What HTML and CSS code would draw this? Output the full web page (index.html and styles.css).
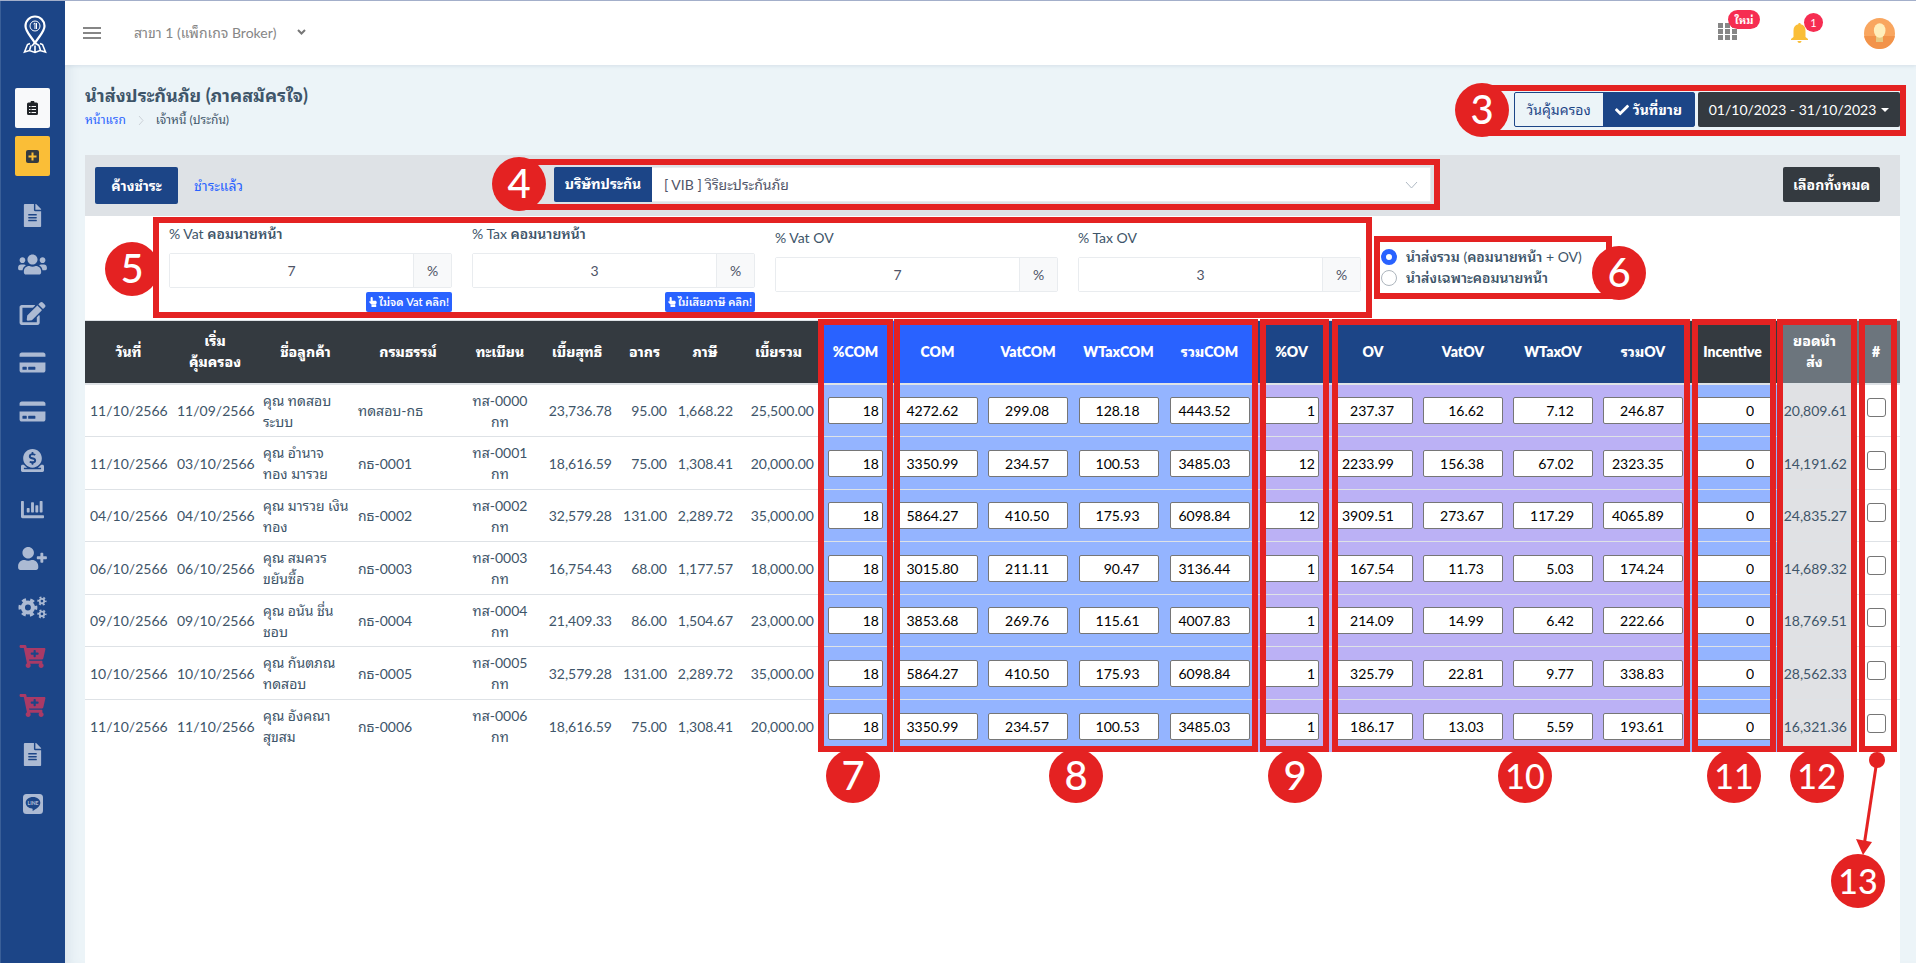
FILE: index.html
```html
<!DOCTYPE html>
<html lang="th">
<head>
<meta charset="utf-8">
<title>นำส่งประกันภัย (ภาคสมัครใจ)</title>
<link rel="stylesheet" href="styles.css">
</head>
<body>
<svg class="sprite" aria-hidden="true">
  <symbol id="i-file" viewBox="0 0 384 512"><path d="M224 136V0H24C10.700 0 0 10.700 0 24v464c0 13.300 10.700 24 24 24h336c13.300 0 24-10.700 24-24V160H248c-13.200 0-24-10.800-24-24zm64 236c0 6.600-5.400 12-12 12H108c-6.600 0-12-5.400-12-12v-8c0-6.600 5.400-12 12-12h168c6.600 0 12 5.400 12 12v8zm0-64c0 6.600-5.400 12-12 12H108c-6.600 0-12-5.400-12-12v-8c0-6.600 5.400-12 12-12h168c6.600 0 12 5.400 12 12v8zm0-72v8c0 6.600-5.400 12-12 12H108c-6.600 0-12-5.400-12-12v-8c0-6.600 5.400-12 12-12h168c6.600 0 12 5.400 12 12zm96-114.100v6.100H256V0h6.100c6.400 0 12.500 2.500 17 7l97.900 98c4.500 4.500 7 10.600 7 16.900z"/></symbol>
  <symbol id="i-users" viewBox="0 0 640 512"><path d="M96 224c35.300 0 64-28.700 64-64s-28.700-64-64-64-64 28.700-64 64 28.700 64 64 64zm448 0c35.300 0 64-28.700 64-64s-28.700-64-64-64-64 28.700-64 64 28.700 64 64 64zm32 32h-64c-17.600 0-33.500 7.100-45.100 18.600 40.300 22.100 68.900 62 75.100 109.400h66c17.700 0 32-14.300 32-32v-32c0-35.300-28.700-64-64-64zm-256 0c61.900 0 112-50.100 112-112S381.900 32 320 32 208 82.100 208 144s50.100 112 112 112zm76.800 32h-8.300c-20.800 10-43.900 16-68.500 16s-47.600-6-68.500-16h-8.300C179.600 288 128 339.600 128 403.200V432c0 26.500 21.500 48 48 48h288c26.500 0 48-21.500 48-48v-28.800c0-63.600-51.600-115.200-115.200-115.200zm-223.700-13.400C161.500 263.100 145.600 256 128 256H64c-35.300 0-64 28.700-64 64v32c0 17.700 14.300 32 32 32h65.900c6.300-47.400 34.900-87.300 75.200-109.400z"/></symbol>
  <symbol id="i-edit" viewBox="0 0 576 512"><path d="M402.600 83.200l90.200 90.200c3.800 3.800 3.800 10 0 13.800L274.400 405.600l-92.800 10.300c-12.400 1.400-22.900-9.100-21.500-21.500l10.300-92.800L388.800 83.200c3.800-3.800 10-3.800 13.800 0zm162-22.900l-48.800-48.800c-15.200-15.200-39.900-15.200-55.200 0l-35.400 35.400c-3.800 3.800-3.800 10 0 13.800l90.200 90.200c3.800 3.800 10 3.800 13.800 0l35.400-35.400c15.200-15.300 15.200-40 0-55.200zM384 346.200V448H64V128h229.800c3.200 0 6.200-1.300 8.500-3.500l40-40c7.600-7.600 2.200-20.500-8.500-20.500H48C21.500 64 0 85.500 0 112v352c0 26.500 21.500 48 48 48h352c26.500 0 48-21.500 48-48V306.200c0-10.700-12.900-16-20.500-8.500l-40 40c-2.200 2.300-3.500 5.300-3.500 8.500z"/></symbol>
  <symbol id="i-card" viewBox="0 0 576 512"><path d="M0 432c0 26.500 21.500 48 48 48h480c26.500 0 48-21.500 48-48V256H0v176zm192-68c0-6.600 5.400-12 12-12h136c6.600 0 12 5.400 12 12v40c0 6.600-5.400 12-12 12H204c-6.600 0-12-5.400-12-12v-40zm-128 0c0-6.600 5.400-12 12-12h72c6.600 0 12 5.400 12 12v40c0 6.600-5.400 12-12 12H76c-6.600 0-12-5.400-12-12v-40zM576 80v48H0V80c0-26.500 21.500-48 48-48h480c26.500 0 48 21.500 48 48z"/></symbol>
  <symbol id="i-donate" viewBox="0 0 512 512"><path d="M256 416c114.900 0 208-93.100 208-208S370.900 0 256 0 48 93.100 48 208s93.100 208 208 208zM233.800 97.400V80.600c0-9.200 7.400-16.600 16.600-16.600h11.100c9.200 0 16.600 7.400 16.600 16.600v17c15.500.8 30.500 6.100 43 15.400 5.600 4.100 6.200 12.300 1.200 17.100L306 145.600c-3.800 3.700-9.500 3.800-14 1-5.400-3.400-11.400-5.100-17.800-5.100h-38.900c-9 0-16.300 8.200-16.300 18.300 0 8.200 5 15.500 12.100 17.600l62.300 18.700c25.700 7.700 43.700 32.400 43.700 60.100 0 34-26.400 61.500-59.100 62.400v16.800c0 9.200-7.400 16.600-16.600 16.600h-11.100c-9.200 0-16.600-7.400-16.600-16.600v-17c-15.500-.8-30.500-6.100-43-15.400-5.600-4.100-6.200-12.300-1.200-17.100l16.300-15.500c3.800-3.700 9.500-3.800 14-1 5.400 3.400 11.400 5.100 17.800 5.100h38.900c9 0 16.300-8.200 16.300-18.300 0-8.200-5-15.500-12.100-17.600l-62.300-18.700c-25.700-7.700-43.700-32.400-43.700-60.100.1-34 26.400-61.500 59.100-62.400zM480 352h-32.500c-19.600 26-44.600 47.700-73 64h63.800c5.300 0 9.600 3.600 9.600 8v16c0 4.400-4.300 8-9.600 8H73.600c-5.300 0-9.600-3.600-9.600-8v-16c0-4.400 4.300-8 9.600-8h63.800c-28.400-16.300-53.300-38-73-64H32c-17.700 0-32 14.300-32 32v96c0 17.700 14.300 32 32 32h448c17.700 0 32-14.300 32-32v-96c0-17.700-14.300-32-32-32z"/></symbol>
  <symbol id="i-chart" viewBox="0 0 512 512"><path d="M332.800 320h38.400c6.400 0 12.800-6.400 12.800-12.800V172.800c0-6.400-6.400-12.800-12.800-12.800h-38.400c-6.400 0-12.800 6.400-12.800 12.800v134.400c0 6.400 6.400 12.800 12.800 12.800zm96 0h38.400c6.400 0 12.800-6.400 12.800-12.800V76.800c0-6.400-6.400-12.800-12.800-12.800h-38.400c-6.400 0-12.800 6.400-12.800 12.800v230.400c0 6.400 6.400 12.800 12.800 12.800zm-288 0h38.400c6.400 0 12.800-6.400 12.800-12.800v-70.400c0-6.400-6.400-12.800-12.800-12.800h-38.400c-6.400 0-12.800 6.400-12.800 12.800v70.400c0 6.400 6.400 12.800 12.800 12.800zm96 0h38.400c6.400 0 12.800-6.400 12.800-12.800V108.800c0-6.400-6.400-12.800-12.800-12.800h-38.400c-6.400 0-12.800 6.400-12.800 12.800v198.400c0 6.400 6.400 12.800 12.800 12.800zM496 384H64V80c0-8.800-7.200-16-16-16H16C7.200 64 0 71.200 0 80v336c0 17.700 14.300 32 32 32h464c8.800 0 16-7.200 16-16v-32c0-8.800-7.200-16-16-16z"/></symbol>
  <symbol id="i-adduser" viewBox="0 0 640 512"><path d="M624 208h-64v-64c0-8.800-7.200-16-16-16h-32c-8.800 0-16 7.200-16 16v64h-64c-8.800 0-16 7.200-16 16v32c0 8.800 7.200 16 16 16h64v64c0 8.800 7.200 16 16 16h32c8.800 0 16-7.200 16-16v-64h64c8.800 0 16-7.200 16-16v-32c0-8.800-7.200-16-16-16zm-400 48c70.700 0 128-57.300 128-128S294.700 0 224 0 96 57.300 96 128s57.300 128 128 128zm89.600 32h-16.700c-22.200 10.200-46.900 16-72.900 16s-50.600-5.800-72.900-16h-16.700C60.200 288 0 348.200 0 422.400V464c0 26.500 21.500 48 48 48h352c26.500 0 48-21.500 48-48v-41.600c0-74.200-60.200-134.400-134.400-134.400z"/></symbol>
  <symbol id="i-cogs" viewBox="0 0 640 512"><g fill="none" stroke="currentColor"><circle cx="218" cy="256" r="112" stroke-width="92"/><circle cx="218" cy="256" r="174" stroke-width="72" stroke-dasharray="91.100 91.100" stroke-dashoffset="45"/><circle cx="530" cy="112" r="50" stroke-width="40"/><circle cx="530" cy="112" r="83" stroke-width="40" stroke-dasharray="43.400 43.400" stroke-dashoffset="21"/><circle cx="530" cy="400" r="50" stroke-width="40"/><circle cx="530" cy="400" r="83" stroke-width="40" stroke-dasharray="43.400 43.400" stroke-dashoffset="21"/></g></symbol>
  <symbol id="i-cart" viewBox="0 0 576 512"><path d="M504.700 320H211.600l6.500 32h268.400c15.400 0 26.800 14.300 23.400 29.300l-5.500 24.300C523.100 414.700 536 433.800 536 456c0 31.200-25.500 56.400-56.800 56-29.800-.4-54.400-24.600-55.200-54.400-.4-16.300 6.100-31 16.800-41.600H231.200C241.600 426.200 248 440.300 248 456c0 31.800-26.500 57.400-58.700 55.900-28.500-1.300-51.800-24.400-53.300-52.900-1.200-22 10.400-41.500 28.100-51.600L93.900 64H24C10.700 64 0 53.300 0 40V24C0 10.700 10.700 0 24 0h102.500c11.400 0 21.200 8 23.500 19.200L159.200 64H552c15.400 0 26.800 14.300 23.400 29.300l-47.300 208C525.600 312.200 515.900 320 504.700 320zM408 168h-48v-40c0-8.800-7.200-16-16-16h-16c-8.800 0-16 7.200-16 16v40h-48c-8.800 0-16 7.200-16 16v16c0 8.800 7.200 16 16 16h48v40c0 8.800 7.200 16 16 16h16c8.800 0 16-7.200 16-16v-40h48c8.800 0 16-7.200 16-16v-16c0-8.800-7.200-16-16-16z"/></symbol>
  <symbol id="i-check" viewBox="0 0 512 512"><path d="M173.900 439.400L7.500 273c-10-10-10-26.200 0-36.200l36.200-36.200c10-10 26.200-10 36.200 0L192 312.700 432.100 72.600c10-10 26.200-10 36.200 0l36.200 36.200c10 10 10 26.200 0 36.200L210.100 439.400c-10 10-26.200 10-36.200 0z"/></symbol>
  <symbol id="i-hand" viewBox="0 0 9 11"><path d="M3 0c.7 0 1.200.5 1.200 1.200V4h2.600C8 4 8.700 4.700 8.700 5.800c0 1.300-.6 1.900-.8 2.700H3L.3 5.700C-.2 5 .8 4.100 1.800 5V1.200C1.800.5 2.300 0 3 0zM2.800 9h5.300v2H2.800z"/></symbol>
</svg>

<div class="app">
  <nav class="sidebar" aria-label="เมนูหลัก">
    <a class="brand" href="#" aria-label="หน้าแรก">
      <svg width="24" height="39" viewBox="0 0 24 39" fill="none" stroke="#fff" stroke-width="2.200"><path d="M12 28C7 20 2.500 16.500 2.500 11a9.500 9.500 0 0 1 19 0C21.500 16.500 17 20 12 28z"/><circle cx="12" cy="11" r="5" stroke-width="1"/><path d="M10.500 9l1.500-1v6M13.500 8v6" stroke-width="1"/><path d="M13 26l-4 5M12 28l4 2.500M7 28.500l-2.500 1L1.500 37l5-1.500L12 37.500l5-2 5.500 1.500-3-7.500-2.500-1M8 30.500L6.500 35.500M12 30.500V37M16 30.500l1.500 5" stroke-width="1.600"/></svg>
    </a>
    <div class="quick">
      <a class="quick-btn quick-light" href="#" aria-label="รายการ"><svg width="11" height="14" viewBox="0 0 11 14"><path fill="#212529" d="M1.500 1.500h2a2 2 0 0 1 4 0h2A1.500 1.500 0 0 1 11 3v9.500a1.500 1.500 0 0 1-1.500 1.500h-8A1.500 1.500 0 0 1 0 12.500V3a1.500 1.500 0 0 1 1.500-1.500z"/><path stroke="#f8f9fa" d="M2 5.500h1.500M4.500 5.500H9M2 8.500h1.500M4.500 8.500H9M2 11.500h1.500M4.500 11.500H9"/></svg></a>
      <a class="quick-btn quick-add" href="#" aria-label="เพิ่ม"><svg width="13" height="13" viewBox="0 0 13 13"><rect width="13" height="13" rx="2" fill="#343a40"/><path stroke="#fabe37" stroke-width="2" d="M2.500 6.500h8M6.500 2.500v8"/></svg></a>
    </div>
    <ul class="menu">
      <li><a href="#" aria-label="เอกสาร"><svg class="ico"><use href="#i-file"/></svg></a></li>
      <li><a href="#" aria-label="ลูกค้า"><svg class="ico"><use href="#i-users"/></svg></a></li>
      <li><a href="#" aria-label="แก้ไข"><svg class="ico"><use href="#i-edit"/></svg></a></li>
      <li><a href="#" aria-label="รับชำระ"><svg class="ico"><use href="#i-card"/></svg></a></li>
      <li><a href="#" aria-label="จ่ายชำระ"><svg class="ico"><use href="#i-card"/></svg></a></li>
      <li><a href="#" aria-label="การเงิน"><svg class="ico"><use href="#i-donate"/></svg></a></li>
      <li><a href="#" aria-label="รายงาน"><svg class="ico"><use href="#i-chart"/></svg></a></li>
      <li><a href="#" aria-label="เพิ่มผู้ใช้"><svg class="ico"><use href="#i-adduser"/></svg></a></li>
      <li><a href="#" aria-label="ตั้งค่า"><svg class="ico"><use href="#i-cogs"/></svg></a></li>
      <li><a class="hot" href="#" aria-label="สั่งซื้อ"><svg class="ico"><use href="#i-cart"/></svg></a></li>
      <li><a class="hot" href="#" aria-label="สั่งซื้อเพิ่ม"><svg class="ico"><use href="#i-cart"/></svg></a></li>
      <li><a href="#" aria-label="คู่มือ"><svg class="ico"><use href="#i-file"/></svg></a></li>
      <li><a href="#" aria-label="ไลน์"><svg width="20" height="20" viewBox="0 0 20 20"><path fill-rule="evenodd" d="M3.500 0h13A3.500 3.500 0 0 1 20 3.500v13a3.500 3.500 0 0 1-3.500 3.500h-13A3.500 3.500 0 0 1 0 16.500v-13A3.500 3.500 0 0 1 3.500 0zM10 3c-4.200 0-7.300 2.500-7.300 5.800 0 3 2.600 5.400 6.400 5.800.5.100.7.500.5 2.400 3.700-1.900 7.700-4.700 7.700-8.200C17.300 5.500 14.200 3 10 3z"/><text x="10" y="10.500" font-family="Lato" font-size="5" font-weight="900" text-anchor="middle">LINE</text></svg></a></li>
    </ul>
  </nav>

  <div class="main">
    <header class="topbar">
      <button class="burger" type="button" aria-label="เมนู"><span></span><span></span><span></span></button>
      <button class="branch" type="button">สาขา 1 (แพ็กเกจ Broker)<svg width="9" height="6" viewBox="0 0 9 6"><path d="M1 1l3.500 3.500L8 1" fill="none" stroke="#777" stroke-width="2"/></svg></button>
      <div class="tools">
        <button class="tool apps" type="button" aria-label="แอป">
          <svg width="19" height="17" viewBox="0 0 19 17" fill="#868686"><path d="M0 0h5v5H0zM7 0h5v5H7zM14 0h5v5h-5zM0 6h5v5H0zM7 6h5v5H7zM14 6h5v5h-5zM0 12h5v5H0zM7 12h5v5H7zM14 12h5v5h-5z"/></svg>
          <span class="pill pill-new">ใหม่</span>
        </button>
        <button class="tool" type="button" aria-label="แจ้งเตือน">
          <svg width="17" height="20" viewBox="0 0 17 20" fill="#fabe37"><path d="M8.500 0c.8 0 1.200.5 1.200 1.300 3.300.6 4.800 3 4.800 6.200v6.500l2.500 2v1H0v-1l2.500-2V7.500c0-3.200 1.500-5.600 4.800-6.200C7.300.5 7.700 0 8.500 0zM6.500 18h4c0 1.300-.9 2-2 2s-2-.7-2-2z"/></svg>
          <span class="pill pill-count">1</span>
        </button>
        <button class="tool avatar" type="button" aria-label="บัญชี">
          <svg width="31" height="31" viewBox="0 0 31 31"><circle cx="15.500" cy="15.500" r="15.500" fill="#f9a65f"/><path fill="#f2934a" d="M.2 18h30.600a15.500 15.500 0 0 1-30.600 0z"/><path fill="#e9c880" d="M12 18h7v6h-7z"/><ellipse cx="15.700" cy="12.500" rx="5.800" ry="7.300" fill="#ffeebb"/></svg>
        </button>
      </div>
    </header>

    <main class="content">
      <div class="page-head">
        <div>
          <h1>นำส่งประกันภัย (ภาคสมัครใจ)</h1>
          <nav class="crumbs" aria-label="เส้นทาง"><a href="#">หน้าแรก</a><svg width="6" height="11" viewBox="0 0 6 11"><path d="M1 1l4 4.500L1 10" fill="none" stroke="#ccd2d8"/></svg><span>เจ้าหนี้ (ประกัน)</span></nav>
        </div>
        <div class="period">
          <div class="toggle">
            <button type="button">วันคุ้มครอง</button><button class="active" type="button"><svg width="14" height="14"><use href="#i-check"/></svg>วันที่ขาย</button>
          </div>
          <button class="range" type="button">01/10/2023 - 31/10/2023<svg width="8" height="4" viewBox="0 0 8 4"><path d="M0 0h8L4 4z"/></svg></button>
        </div>
      </div>

      <section class="panel">
        <div class="filterbar">
          <div class="tabs"><button class="tab active" type="button">ค้างชำระ</button><button class="tab" type="button">ชำระแล้ว</button></div>
          <div class="insurer">
            <label for="insurer">บริษัทประกัน</label>
            <div class="select-wrap"><select id="insurer"><option>[ VIB ] วิริยะประกันภัย</option></select><svg width="13" height="8" viewBox="0 0 13 8"><path d="M1 1l5.500 6L12 1" fill="none" stroke="#b0bac4"/></svg></div>
          </div>
          <div class="pick"><button class="dark" type="button">เลือกทั้งหมด</button></div>
        </div>

        <form class="rates">
          <div class="rate"><label for="vatc">% Vat <b>คอมนายหน้า</b></label><div class="group"><input id="vatc" value="7"><span>%</span></div><button class="mini" type="button"><svg width="8" height="10"><use href="#i-hand"/></svg>ไม่จด Vat คลิก!</button></div>
          <div class="rate"><label for="taxc">% Tax <b>คอมนายหน้า</b></label><div class="group"><input id="taxc" value="3"><span>%</span></div><button class="mini" type="button"><svg width="8" height="10"><use href="#i-hand"/></svg>ไม่เสียภาษี คลิก!</button></div>
          <div class="rate rate-ov"><label for="vato">% Vat OV</label><div class="group"><input id="vato" value="7"><span>%</span></div></div>
          <div class="rate rate-ov"><label for="taxo">% Tax OV</label><div class="group"><input id="taxo" value="3"><span>%</span></div></div>
          <div class="modes">
            <label><input type="radio" name="mode" checked><span><b>นำส่งรวม</b> (<b>คอมนายหน้า</b> + OV)</span></label>
            <label><input type="radio" name="mode"><span><b>นำส่งเฉพาะคอมนายหน้า</b></span></label>
          </div>
        </form>

        <table class="ledger">
          <colgroup><col class="w87"><col class="w86"><col class="w95"><col class="w110"><col class="w74"><col class="w80"><col class="w55"><col class="w66"><col class="w81"><col class="w73"><col class="w91"><col class="w90"><col class="w91"><col class="w91"><col class="w73"><col class="w90"><col class="w90"><col class="w90"><col class="w90"><col class="w89"><col class="w75"><col class="w48"></colgroup>
          <thead><tr>
            <th>วันที่</th><th>เริ่ม<br>คุ้มครอง</th><th>ชื่อลูกค้า</th><th>กรมธรรม์</th><th>ทะเบียน</th><th>เบี้ยสุทธิ</th><th>อากร</th><th>ภาษี</th><th>เบี้ยรวม</th>
            <th class="h-com">%COM</th><th class="h-com">COM</th><th class="h-com">VatCOM</th><th class="h-com">WTaxCOM</th><th class="h-com">รวมCOM</th>
            <th class="h-ov">%OV</th><th class="h-ov">OV</th><th class="h-ov">VatOV</th><th class="h-ov">WTaxOV</th><th class="h-ov">รวมOV</th>
            <th>Incentive</th><th class="h-sum">ยอดนำ<br>ส่ง</th><th class="h-sum">#</th>
          </tr></thead>
          <tbody id="rows"></tbody>
        </table>
      </section>
    </main>
  </div>

  <div class="notes">
    <div class="frame f3"></div><div class="frame f4"></div><div class="frame f5"></div><div class="frame f6"></div>
    <div class="frame col f7"></div><div class="frame col f8"></div><div class="frame col f9"></div><div class="frame col f10"></div><div class="frame col f11"></div><div class="frame col f12"></div><div class="frame col f13"></div>
    <svg class="arrow" width="30" height="110" viewBox="0 0 30 110"><circle cx="22" cy="10" r="8"/><path d="M22 10L9 96" stroke="#e42222" stroke-width="3"/><path d="M1 89l16 3-9 13z"/></svg>
    <span class="dot d3">3</span><span class="dot d4">4</span><span class="dot d5">5</span><span class="dot d6">6</span><span class="dot d7">7</span><span class="dot d8">8</span><span class="dot d9">9</span><span class="dot two d10">10</span><span class="dot two d11">11</span><span class="dot two d12">12</span><span class="dot two d13">13</span>
  </div>
</div>
<script src="app.js"></script>
</body>
</html>
```
FILE: styles.css
```css
* { box-sizing: border-box; }
body { margin: 0; background: #ecf4f8; color: #3e5569; font: 14px/21px Lato, "Noto Sans Thai Looped", Loma, Laksaman, Waree, Garuda, Norasi, "Noto Serif Thai", "Noto Sans", sans-serif; }
button, input, select { font: inherit; color: inherit; margin: 0; }
button { border: 0; background: none; padding: 0; cursor: pointer; white-space: nowrap; }
a { color: #2962ff; text-decoration: none; }
svg { flex: none; }
svg:not([fill]) { fill: currentColor; }
.sprite { display: none; }

.app { position: relative; display: flex; min-height: 100vh; overflow: hidden; border-top: 1px solid #a3afca; }

.sidebar { width: 65px; flex: none; background: #1c4587; border-left: 1px solid #3a5f98; }
.brand { display: flex; justify-content: center; height: 64px; padding: 14px 0 0 4px; }
.quick { display: grid; gap: 8px; padding: 23px 15px 15px 14px; }
.quick-btn { display: flex; align-items: center; justify-content: center; height: 40px; border-radius: 2px; }
.quick-light { background: #f8f9fa; }
.quick-add { background: #fabe37; }
.menu { list-style: none; margin: 0; padding: 0 1px 0 0; }
.menu a { display: flex; align-items: center; justify-content: center; height: 49px; color: #acbad3; }
.menu .hot { color: #a93a66; }
.ico { width: 29px; height: 23px; }

.main { flex: 1; min-width: 0; display: flex; flex-direction: column; }
.topbar { display: flex; align-items: center; height: 64px; padding: 0 21px 0 18px; background: #fff; box-shadow: 0 1px 4px rgba(60, 90, 130, .12); position: relative; }
.burger { display: grid; gap: 3px; width: 18px; }
.burger span { height: 2px; background: #868686; }
.branch { display: flex; align-items: center; gap: 20px; margin-left: 33px; padding-bottom: 2px; color: #868686; }
.tools { display: flex; align-items: center; margin-left: auto; }
.tool { position: relative; display: flex; }
.tool + .tool { margin-left: 54px; }
.tool + .avatar { margin-left: 56px; }
.apps { margin-bottom: 4px; }
.pill { position: absolute; left: 10px; bottom: 11px; height: 19px; border-radius: 10px; background: #f62d51; color: #fff; font-size: 11px; line-height: 19px; text-align: center; }
.pill-new { width: 32px; font-weight: 700; }
.pill-count { width: 19px; left: 13px; }

.content { flex: 1; display: flex; flex-direction: column; padding: 0 16px 0 20px; box-shadow: inset 12px 0 12px -8px rgba(60, 90, 130, .1); }
.page-head { display: flex; justify-content: space-between; height: 90px; padding-top: 17px; }
h1 { margin: 0; font-size: 18px; line-height: 26px; font-weight: 700; }
.crumbs { display: flex; align-items: center; gap: 12px; font-size: 12px; line-height: 24px; }
.period { display: flex; gap: 3px; height: 35px; margin-top: 10px; }
.toggle { display: flex; border: 1px solid #1c4587; border-radius: 2px; color: #1c4587; }
.toggle button { padding: 0 12px; }
.toggle .active { display: flex; align-items: center; gap: 4px; background: #1c4587; color: #fff; font-weight: 700; }
.range { display: flex; align-items: center; justify-content: center; gap: 5px; width: 202px; border-radius: 2px; background: #343a40; color: #fff; }

.panel { flex: 1; background: #fff; }
.filterbar { display: grid; grid-template-columns: 459px minmax(0, 877px) minmax(0, 1fr); height: 61px; padding: 12px 20px 0 10px; background: #dee2e6; }
.tabs { display: flex; height: 37px; }
.tab { padding: 0 16px; color: #2962ff; border-radius: 2px; }
.tab.active { width: 83px; background: #1c4587; color: #fff; font-weight: 700; }
.insurer { display: flex; height: 35px; }
.insurer label { width: 98px; flex: none; background: #1c4587; color: #fff; font-weight: 700; line-height: 34px; text-align: center; border-radius: 2px 0 0 2px; }
.select-wrap { position: relative; flex: 1; }
.select-wrap select { width: 100%; height: 35px; padding: 0 12px; border: 1px solid #e9ecef; border-left: 0; background: #fff; color: #4f5467; appearance: none; }
.select-wrap svg { position: absolute; right: 13px; top: 14px; }
.pick { text-align: right; }
.dark { width: 97px; height: 35px; border-radius: 2px; background: #343a40; color: #fff; font-weight: 700; }

.rates { display: grid; grid-template-columns: repeat(4, minmax(0, 1fr)) 519px; column-gap: 20px; height: 104px; padding: 7px 0 0 84px; }
.rate { display: flex; flex-direction: column; }
.rate-ov { padding-top: 4px; }
.rate label { height: 30px; line-height: 22px; }
.rate b, .modes b { font-weight: 600; }
.group { display: flex; height: 35px; border: 1px solid #e9ecef; border-radius: 2px; color: #4f5467; }
.group input { flex: 1; min-width: 0; border: 0; text-align: center; background: #fff; }
.group span { width: 38px; border-left: 1px solid #e9ecef; background: #f8f9fa; line-height: 33px; text-align: center; }
.mini { display: flex; align-items: center; gap: 2px; align-self: flex-end; height: 20px; margin-top: 4px; padding: 0 3px; border-radius: 2px; background: #2962ff; color: #fff; font-size: 11px; line-height: 20px; font-weight: 600; }
.modes { padding-top: 23px; }
.modes label { display: flex; align-items: center; gap: 9px; height: 21px; }
.modes input { width: 16px; height: 16px; appearance: none; border: 1px solid #adb5bd; border-radius: 50%; background: #fff; }
.modes input:checked { border: 5px solid #2962ff; }

.ledger { width: 100%; table-layout: fixed; border-collapse: separate; border-spacing: 0; }
.w48 { width: 48px; } .w55 { width: 55px; } .w66 { width: 66px; } .w73 { width: 73px; } .w74 { width: 74px; } .w75 { width: 75px; }
.w80 { width: 80px; } .w81 { width: 81px; } .w86 { width: 86px; } .w87 { width: 87px; } .w89 { width: 89px; } .w90 { width: 90px; }
.w91 { width: 91px; } .w95 { width: 95px; } .w110 { width: 110px; }
.ledger th { height: 65px; padding: 0 4px 2px; border-top: 1px solid #dee2e6; border-bottom: 2px solid #dee2e6; background: #343a40; color: #fff; font-weight: 800; white-space: nowrap; }
.ledger .h-com { background: #2962ff; }
.ledger .h-ov { background: #1c4587; }
.ledger .h-sum { background: #6c757d; }
.ledger td { height: 52px; padding: 4px 5px; border-bottom: 1px solid #dee2e6; white-space: nowrap; }
.ledger tr:nth-child(even) td { height: 53px; }
.ledger tr:last-child td { border-bottom: 0; }
.ledger .c { text-align: center; }
.ledger .r { text-align: right; }
.ledger .com, .ledger .inc { background: #94b4ff; text-align: center; }
.ledger .ov { background: #bbb1f5; text-align: center; }
.ledger .sum { background: #e0e1e4; }
.cell { display: block; width: 80px; height: 27px; margin: 0 auto; padding: 0 18px 0 2px; border: 1px solid #767676; border-radius: 2px; background: #fff; color: #000; text-align: right; }
.cell.pct { width: 55px; padding: 0 3px; }
.tick { display: block; width: 19px; height: 19px; margin: 0 auto 6px; appearance: none; border: 1px solid #767676; border-radius: 3px; background: #fff; }

/* Numbered callouts laid over the page */
.notes { position: absolute; left: 0; top: -1px; width: 100%; height: 100%; pointer-events: none; }
.frame { position: absolute; border: 6px solid #e42222; }
.f3 { left: 1482px; top: 85px; width: 424px; height: 51px; }
.f4 { left: 519px; top: 159px; width: 921px; height: 51px; }
.f5 { left: 153px; top: 217px; width: 1219px; height: 101px; }
.f6 { left: 1374px; top: 236px; width: 238px; height: 63px; }
.col { top: 319px; height: 433px; }
.f7 { left: 818px; width: 75px; }
.f8 { left: 894px; width: 364px; }
.f9 { left: 1260px; width: 69px; }
.f10 { left: 1332px; width: 358px; }
.f11 { left: 1692px; width: 84px; }
.f12 { left: 1777px; width: 80px; }
.f13 { left: 1859px; width: 38px; }
.arrow { position: absolute; left: 1855px; top: 750px; color: #e42222; }
.dot { position: absolute; width: 54px; height: 54px; border-radius: 50%; background: #e42222; color: #fff; font-size: 40px; line-height: 53px; font-weight: 500; text-align: center; }
.two { font-size: 34px; }
.d3 { left: 1455px; top: 83px; }
.d4 { left: 492px; top: 157px; }
.d5 { left: 105px; top: 242px; }
.d6 { left: 1592px; top: 246px; }
.d7 { left: 826px; top: 749px; }
.d8 { left: 1049px; top: 749px; }
.d9 { left: 1268px; top: 749px; }
.d10 { left: 1498px; top: 749px; }
.d11 { left: 1707px; top: 749px; }
.d12 { left: 1790px; top: 749px; }
.d13 { left: 1831px; top: 854px; }
```
FILE: app.js
```js
const rows = [
  ["11/10/2566", "11/09/2566", "คุณ ทดสอบ|ระบบ", "ทดสอบ-กธ", "ทส-0000", "23,736.78", "95.00", "1,668.22", "25,500.00", "18", "4272.62", "299.08", "128.18", "4443.52", "1", "237.37", "16.62", "7.12", "246.87", "0", "20,809.61"],
  ["11/10/2566", "03/10/2566", "คุณ อำนาจ|ทอง มารวย", "กธ-0001", "ทส-0001", "18,616.59", "75.00", "1,308.41", "20,000.00", "18", "3350.99", "234.57", "100.53", "3485.03", "12", "2233.99", "156.38", "67.02", "2323.35", "0", "14,191.62"],
  ["04/10/2566", "04/10/2566", "คุณ มารวย เงิน|ทอง", "กธ-0002", "ทส-0002", "32,579.28", "131.00", "2,289.72", "35,000.00", "18", "5864.27", "410.50", "175.93", "6098.84", "12", "3909.51", "273.67", "117.29", "4065.89", "0", "24,835.27"],
  ["06/10/2566", "06/10/2566", "คุณ สมควร|ขยันซื้อ", "กธ-0003", "ทส-0003", "16,754.43", "68.00", "1,177.57", "18,000.00", "18", "3015.80", "211.11", "90.47", "3136.44", "1", "167.54", "11.73", "5.03", "174.24", "0", "14,689.32"],
  ["09/10/2566", "09/10/2566", "คุณ อนัน ชื่น|ชอบ", "กธ-0004", "ทส-0004", "21,409.33", "86.00", "1,504.67", "23,000.00", "18", "3853.68", "269.76", "115.61", "4007.83", "1", "214.09", "14.99", "6.42", "222.66", "0", "18,769.51"],
  ["10/10/2566", "10/10/2566", "คุณ กันตภณ|ทดสอบ", "กธ-0005", "ทส-0005", "32,579.28", "131.00", "2,289.72", "35,000.00", "18", "5864.27", "410.50", "175.93", "6098.84", "1", "325.79", "22.81", "9.77", "338.83", "0", "28,562.33"],
  ["11/10/2566", "11/10/2566", "คุณ อังคณา|สุขสม", "กธ-0006", "ทส-0006", "18,616.59", "75.00", "1,308.41", "20,000.00", "18", "3350.99", "234.57", "100.53", "3485.03", "1", "186.17", "13.03", "5.59", "193.61", "0", "16,321.36"]
];
const heads = [...document.querySelectorAll(".ledger th")].map(th => th.textContent);

function cell(value, i) {
  if (i < 2) return `<td class="c">${value}</td>`;
  if (i < 4) return `<td>${value.replace("|", "<br>")}</td>`;
  if (i === 4) return `<td class="c">${value}<br>กท</td>`;
  if (i < 9) return `<td class="r">${value}</td>`;
  if (i === 20) return `<td class="r sum">${value}</td>`;
  const tone = i < 14 ? "com" : i < 19 ? "ov" : "inc";
  const pct = i === 9 || i === 14 ? " pct" : "";
  return `<td class="${tone}"><input class="cell${pct}" aria-label="${heads[i]}" value="${value}"></td>`;
}

document.getElementById("rows").innerHTML = rows.map(row =>
  `<tr>${row.map(cell).join("")}<td><input class="tick" type="checkbox" aria-label="เลือก ${row[4]}"></td></tr>`
).join("");
```
